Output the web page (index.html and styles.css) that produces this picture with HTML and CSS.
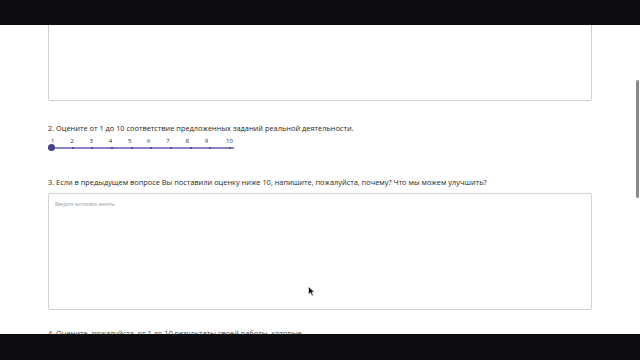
FILE: index.html
```html
<!DOCTYPE html>
<html lang="ru">
<head>
<meta charset="utf-8">
<title>Анкета</title>
<link rel="stylesheet" href="styles.css">
</head>
<body>
<div class="screen">
  <div class="bar"></div>
  <div class="viewport">
    <div class="content">
      <div class="field field-top"></div>
      <div class="question q2">2. Оцените от 1 до 10 соответствие предложенных заданий реальной деятельности.</div>
      <div class="slider">
        <div class="nums">
          <span>1</span><span>2</span><span>3</span><span>4</span><span>5</span><span>6</span><span>7</span><span>8</span><span>9</span><span>10</span>
        </div>
        <div class="track">
          <span class="tick"></span><span class="tick"></span><span class="tick"></span><span class="tick"></span><span class="tick"></span><span class="tick"></span><span class="tick"></span><span class="tick"></span><span class="tick"></span><span class="tick"></span>
          <span class="thumb"></span>
        </div>
      </div>
      <div class="question q3">3. Если в предыдущем вопросе Вы поставили оценку ниже 10, напишите, пожалуйста, почему? Что мы можем улучшить?</div>
      <div class="field field-main"><span class="placeholder">Введите заголовок анкеты</span></div>
      <div class="question q4">4. Оцените, пожалуйста, от 1 до 10 результаты своей работы, которые</div>
    </div>
    <div class="scrollbar"></div>
    <svg class="cursor" width="8" height="11" viewBox="0 0 8 11"><path d="M0.5 0.5 L0.5 8.5 L2.5 6.8 L4 10 L5.3 9.4 L3.9 6.3 L6.5 6.3 Z" fill="#111" stroke="#fff" stroke-width="0.6"/></svg>
  </div>
  <div class="bar bar-bottom"></div>
</div>
</body>
</html>
```
FILE: styles.css
```css
* { box-sizing: border-box; }
html, body { margin: 0; padding: 0; background: #0d0e12; }
.screen {
  width: 640px;
  height: 360px;
  display: flex;
  flex-direction: column;
  overflow: hidden;
}
.bar { height: 25px; background: #0d0e12; flex: none; }
.bar-bottom { height: 26px; }
.viewport {
  position: relative;
  flex: 1;
  background: #ffffff;
  overflow: hidden;
}
.content {
  padding: 0 48px;
  font-family: "Open Sans", "Noto Sans", sans-serif;
  color: #1f1f24;
}
.field {
  width: 544px;
  border: 1px solid #d2d2d4;
  border-radius: 2px;
  background: #fff;
}
.field-top {
  height: 96px;
  margin-top: -20px;
}
.question {
  font-size: 7.4px;
  font-weight: 500;
  line-height: 10px;
  white-space: nowrap;
}
.q2 { margin-top: 22px; }
.slider { margin-top: 4px; width: 186px; }
.nums {
  display: flex;
  justify-content: space-between;
  padding: 0 1px 0 3px;
  font-size: 6px;
  font-weight: 500;
  line-height: 8px;
  color: #2a2a33;
}
.nums span { width: 8px; text-align: left; }
.nums span:last-child { width: 9px; text-align: right; }
.track {
  position: relative;
  margin-top: 2px;
  height: 1.5px;
  background: #8784c8;
  display: flex;
  justify-content: space-between;
  align-items: center;
  padding: 0 3px 0 4px;
}
.tick {
  width: 2px;
  height: 2px;
  border-radius: 50%;
  background: #3f3d80;
}
.thumb {
  position: absolute;
  left: 0;
  top: -2.75px;
  width: 7px;
  height: 7px;
  border-radius: 50%;
  background: #45438a;
}
.q3 { margin-top: 28px; }
.field-main {
  margin-top: 6px;
  height: 117px;
  padding: 7px 6px;
}
.placeholder {
  display: block;
  font-size: 4.6px;
  line-height: 6px;
  color: #9a9aa0;
}
.q4 { margin-top: 18px; color: #444; }
.scrollbar {
  position: absolute;
  right: 1px;
  top: 55px;
  width: 3px;
  height: 118px;
  border-radius: 2px;
  background: #8a8a8a;
}
.cursor {
  position: absolute;
  left: 308px;
  top: 261px;
}
```
